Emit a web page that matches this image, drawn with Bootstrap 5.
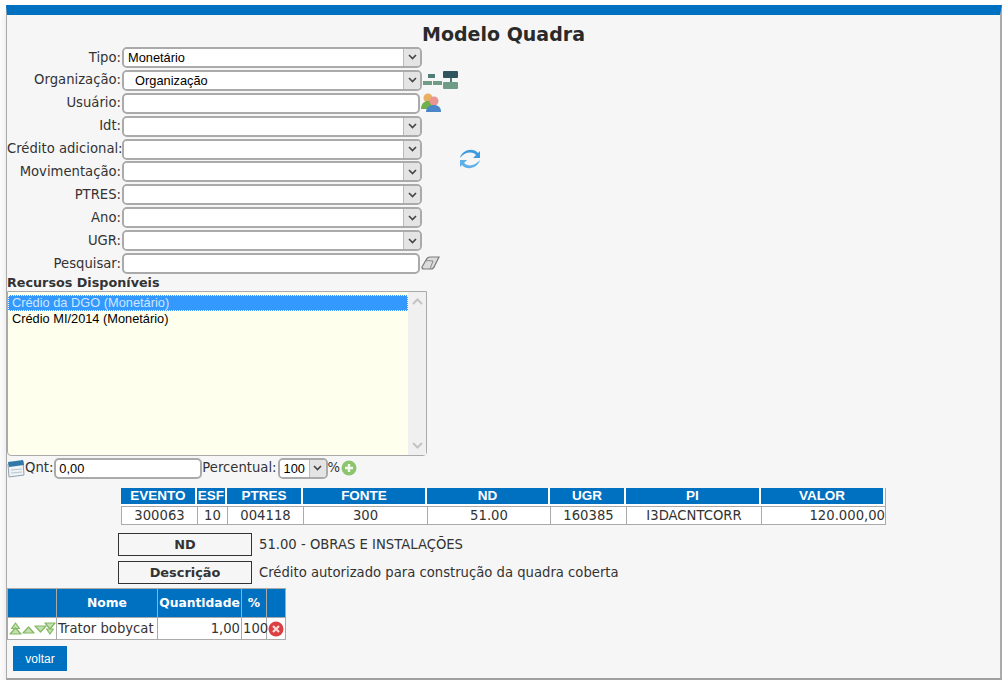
<!DOCTYPE html>
<html lang="pt-BR">
<head>
  <meta charset="UTF-8">
  <meta name="viewport" content="width=device-width, initial-scale=1.0">
  <title>Modelo Quadra</title>
  <link href="https://cdn.jsdelivr.net/npm/bootstrap@5.3.2/dist/css/bootstrap.min.css" rel="stylesheet">
  <style>
    body {
      background-color: #fff;
      font-family: "DejaVu Sans", Verdana, sans-serif;
      font-size: 13.2px;
      color: #333;
      line-height: 1.2;
    }

    .ms-px {
      margin-left: 1px;
    }

    .painel {
      margin: 5px 0 0 6px;
      height: 675px;
      width: 996px;
      background-color: #f6f6f6;
      border-top: 10px solid #0070c0;
      border-left: 1px solid #aaa;
      border-right: 2px solid #aaa;
      border-bottom: 2px solid #a0a0a0;
      box-shadow: 0 6px 10px rgba(0, 0, 0, 0.12);
    }

    .painel h1 {
      font-size: 19px;
      font-weight: bold;
      text-align: center;
      color: #2a2a2a;
      margin: 0;
      height: 31px;
      padding-top: 10px;
      line-height: 19px;
    }

    #filtros {
      position: relative;
    }

    .refresh {
      position: absolute;
      left: 452px;
      top: 102px;
    }

    .linha {
      display: flex;
      align-items: center;
      height: 22.9px;
    }

    .linha label {
      width: 114px;
      text-align: right;
      flex-shrink: 0;
      white-space: nowrap;
      margin-right: 1px;
    }

    .campo {
      height: 21px;
      border: 2px solid #aaa;
      border-radius: 5px;
      background-color: #fff;
      font-family: "Liberation Sans", Arial, sans-serif;
      font-size: 12.8px;
      color: #000;
    }

    .campo:focus {
      outline: none;
    }

    input.campo {
      width: 298px;
      padding: 0 3px;
    }

    .combo {
      width: 300px;
      display: flex;
      overflow: hidden;
    }

    .combo select {
      flex-grow: 1;
      min-width: 0;
      border: 0;
      padding: 1px 4px 0;
      background: #fff;
      font: inherit;
      color: #000;
      appearance: none;
      outline: none;
    }

    .combo .seta {
      width: 17px;
      flex-shrink: 0;
      display: flex;
      align-items: center;
      justify-content: center;
      background-color: #e4e4e4;
      border-left: 1px solid #bbb;
    }

    .recursos-titulo {
      font-size: 12.75px;
      font-weight: bold;
      height: 16px;
      line-height: 16px;
    }

    .lista {
      width: 420px;
      height: 165px;
      border: 1px solid #aaa;
      border-radius: 0 0 4px 4px;
      background-color: #ffffee;
      font-family: "Liberation Sans", Arial, sans-serif;
      font-size: 12.8px;
      color: #000;
      padding-top: 3px;
      display: flex;
    }

    .lista .opcoes {
      flex-grow: 1;
    }

    .lista .opcoes div {
      height: 16px;
      line-height: 16px;
      padding-left: 4px;
    }

    .lista .opcoes .ativa {
      background-color: #3399ff;
      color: #cfe6ff;
      outline: 1px dotted #fff;
      outline-offset: -1px;
    }

    .lista .barra {
      width: 18px;
      margin-top: -3px;
      background-color: #f0f0f0;
      display: flex;
      flex-direction: column;
      justify-content: space-between;
      align-items: center;
      padding: 6px 0;
    }

    .qnt {
      height: 21px;
      margin-top: 2px;
    }

    .qnt input.campo {
      width: 148px;
      margin-left: 1px;
    }

    .qnt .combo {
      width: 50px;
      margin-left: 1px;
    }

    .tabela-dados {
      border-collapse: separate;
      border-spacing: 0;
      table-layout: fixed;
      background: #fff;
    }

    .tabela-dados th {
      background-color: #0070c0;
      color: #fff;
      font-weight: bold;
      text-align: center;
    }

    .creditos {
      width: 764px;
      margin: 9px 0 0 114px;
      font-family: "Liberation Sans", Arial, sans-serif;
      border-right: 1px solid #aaa;
      border-bottom: 1px solid #aaa;
    }

    .creditos th {
      font-size: 13.5px;
      height: 18px;
      padding: 0;
      border-right: 2px solid #fff;
      border-bottom: 2px solid #fff;
      background-clip: padding-box;
    }

    .creditos td {
      font-family: "DejaVu Sans", Verdana, sans-serif;
      height: 18px;
      padding: 0;
      text-align: center;
      border-left: 1px solid #aaa;
      border-top: 1px solid #aaa;
    }

    .descricao {
      display: flex;
      align-items: center;
      margin: 0 0 0 111px;
      height: 23px;
    }

    .descricao strong {
      width: 134px;
      height: 23px;
      line-height: 21px;
      border: 1px solid #333;
      text-align: center;
      margin-right: 7px;
      font-size: 12.9px;
      color: #333;
    }

    .descricao-2 {
      margin-top: 5px;
    }

    .itens {
      width: 278px;
      margin: 4px 0 0 0;
      border-top: 1px solid #aaa;
      border-left: 1px solid #aaa;
    }

    .itens th, .itens td {
      border-right: 1px solid #aaa;
      border-bottom: 1px solid #aaa;
      padding: 0 1px;
      white-space: nowrap;
    }

    .itens th {
      height: 29px;
      font-size: 12.3px;
    }

    .itens td {
      height: 22px;
    }

    .btn-voltar {
      background-color: #0070c0;
      color: #fff;
      border: 0;
      border-radius: 0;
      font-family: "Liberation Sans", Arial, sans-serif;
      font-size: 12px;
      width: 54px;
      height: 25px;
      padding: 0;
      margin: 6px 0 0 6px;
    }

    .btn-voltar:hover {
      background-color: #005f9f;
      color: #fff;
    }
  </style>
</head>
<body>
  <div class="painel">
    <h1>Modelo Quadra</h1>

    <div id="filtros"></div>

    <div class="recursos-titulo">Recursos Disponíveis</div>
    <div class="lista">
      <div class="opcoes">
        <div class="ativa">Crédio da DGO (Monetário)</div>
        <div>Crédio MI/2014 (Monetário)</div>
      </div>
      <div class="barra">
        <svg width="11" height="7" viewBox="0 0 11 7"><path d="M1 6l4.500-4.500L10 6" fill="none" stroke="#c4c4c4" stroke-width="2"/></svg>
        <svg width="11" height="7" viewBox="0 0 11 7"><path d="M1 1l4.500 4.500L10 1" fill="none" stroke="#c4c4c4" stroke-width="2"/></svg>
      </div>
    </div>

    <div class="linha qnt">
      <svg width="18" height="19" viewBox="0 0 18 19" class="flex-shrink-0">
        <path d="M1 5l15-3 1 14-15 2z" fill="#eef2f5" stroke="#8fa3b2"/>
        <path d="M1 3l15-2 1 5-15 2z" fill="#2f78a8"/>
        <path d="M4 11l11-1M4 14l11-1" stroke="#b9c6cf"/>
      </svg>
      <span>Qnt:</span>
      <input class="campo" type="text" value="0,00">
      <span class="text-nowrap">Percentual:</span>
      <div class="campo combo">
        <select><option>100</option></select>
        <span class="seta"><svg width="9" height="6" viewBox="0 0 9 6"><path d="M1 1l3.500 3.500L8 1" fill="none" stroke="#444" stroke-width="1.600"/></svg></span>
      </div>
      <span>%</span>
      <svg width="16" height="16" viewBox="0 0 16 16" class="flex-shrink-0 ms-px">
        <circle cx="8" cy="8" r="7.500" fill="#8cc56d"/>
        <path d="M8 4v8M4 8h8" stroke="#f2f8ee" stroke-width="2.400"/>
      </svg>
    </div>

    <table class="tabela-dados creditos">
      <colgroup>
        <col style="width:76px"><col style="width:30px"><col style="width:76px"><col style="width:124px">
        <col style="width:123px"><col style="width:76px"><col style="width:135px"><col style="width:124px">
      </colgroup>
      <thead>
        <tr><th>EVENTO</th><th>ESF</th><th>PTRES</th><th>FONTE</th><th>ND</th><th>UGR</th><th>PI</th><th>VALOR</th></tr>
      </thead>
      <tbody>
        <tr>
          <td>300063</td><td>10</td><td>004118</td><td>300</td><td>51.00</td><td>160385</td><td>I3DACNTCORR</td><td class="text-end">120.000,00</td>
        </tr>
      </tbody>
    </table>

    <div class="descricao mt-2"><strong>ND</strong><span>51.00 - OBRAS E INSTALAÇÕES</span></div>
    <div class="descricao descricao-2"><strong>Descrição</strong><span>Crédito autorizado para construção da quadra coberta</span></div>

    <table class="tabela-dados itens">
      <colgroup>
        <col style="width:49px"><col style="width:101px"><col style="width:84px"><col style="width:25px"><col style="width:19px">
      </colgroup>
      <thead>
        <tr><th></th><th>Nome</th><th>Quantidade</th><th>%</th><th></th></tr>
      </thead>
      <tbody>
        <tr>
          <td class="p-0">
            <div class="d-flex justify-content-center">
              <svg width="47" height="13" viewBox="0 0 47 13">
                <g fill="#c4e0b0" stroke="#80b860" stroke-width="1.200" stroke-linejoin="round">
                  <path d="M2.500 6.500L6.500 1l4 5.500z"/>
                  <path d="M1 12l5.500-6 5.500 6z"/>
                  <path d="M14 11l5.500-6 5.500 6z"/>
                  <path d="M26 4h11l-5.500 6z"/>
                  <path d="M36 1h10l-5 6z"/>
                  <path d="M37.500 7h7l-3.500 5z"/>
                </g>
              </svg>
            </div>
          </td>
          <td>Trator bobycat</td>
          <td class="text-end">1,00</td>
          <td class="text-center">100</td>
          <td class="p-0 text-center">
            <svg width="16" height="16" viewBox="0 0 16 16" class="d-block mx-auto">
              <circle cx="8" cy="8" r="7.500" fill="#dc3f42"/>
              <path d="M5 5l6 6M11 5l-6 6" stroke="#f6dcdc" stroke-width="2.200"/>
            </svg>
          </td>
        </tr>
      </tbody>
    </table>

    <button type="button" class="btn btn-voltar d-block">voltar</button>
  </div>

  <script>
    // Linhas do filtro
    const seta = '<span class="seta"><svg width="9" height="6" viewBox="0 0 9 6"><path d="M1 1l3.500 3.500L8 1" fill="none" stroke="#444" stroke-width="1.600"/></svg></span>';
    const icones = {
      org: '<svg width="37" height="20" viewBox="0 0 37 20" class="flex-shrink-0"><g fill="#6f9c86"><rect x="6" y="4" width="7" height="4" fill="#4f7f74"/><rect x="1" y="11" width="9" height="4"/><rect x="11" y="11" width="9" height="4"/><rect x="21" y="12" width="15" height="7" rx="1"/><path d="M28 7h2v5h-2z" fill="#4f7f74"/><rect x="21" y="1" width="15" height="7" rx="1" fill="#2f5560"/></g></svg>',
      usuario: '<svg width="21" height="20" viewBox="0 0 21 20" class="flex-shrink-0 ms-px"><circle cx="7" cy="5" r="4.500" fill="#e8b060"/><path d="M0 16c0-6 4-8 7-8s6 2 6 8z" fill="#6fb04a"/><circle cx="13" cy="8" r="4.500" fill="#ea9590"/><path d="M5 19c0-5 4-7 8-7s7 2 7 7z" fill="#4a86c8"/></svg>',
      borracha: '<svg width="19" height="15" viewBox="0 0 19 15" class="flex-shrink-0 ms-px"><path d="M1 11l4-7c1-2 2-3 4-3h9l-4 8c-1 3-2 4-4 4H3c-2 0-2-1-2-2z" fill="#dcdcdc" stroke="#7a7a7a" stroke-width="1.200"/><path d="M5 5c2-1 4 0 7 0l-3 8" fill="none" stroke="#8a8a8a"/></svg>'
    };
    const filtros = [
      { label: "Tipo", valor: "Monetário" },
      { label: "Organização", valor: "\u00a0\u00a0Organização", icone: icones.org },
      { label: "Usuário", texto: true, icone: icones.usuario },
      { label: "Idt" },
      { label: "Crédito adicional" },
      { label: "Movimentação" },
      { label: "PTRES" },
      { label: "Ano" },
      { label: "UGR" },
      { label: "Pesquisar", texto: true, icone: icones.borracha },
    ];

    const refresh = '<svg class="refresh" width="22" height="22" viewBox="0 0 22 22"><path d="M1 10C3 2 14-1 19 5l2-2v7h-7l3-3C13 3 6 4 1 10z" fill="#3f9be0"/><path d="M21 12C19 20 8 23 3 17l-2 2v-7h7l-3 3c4 4 11 3 16-3z" fill="#5fb0e8"/></svg>';

    document.getElementById("filtros").innerHTML = filtros.map((f) => {
      const campo = f.texto
        ? '<input class="campo" type="text">'
        : `<div class="campo combo"><select><option>${f.valor || ""}</option></select>${seta}</div>`;
      return `<div class="linha"><label>${f.label}:</label>${campo}${f.icone || ""}</div>`;
    }).join("") + refresh;
  </script>
</body>
</html>
